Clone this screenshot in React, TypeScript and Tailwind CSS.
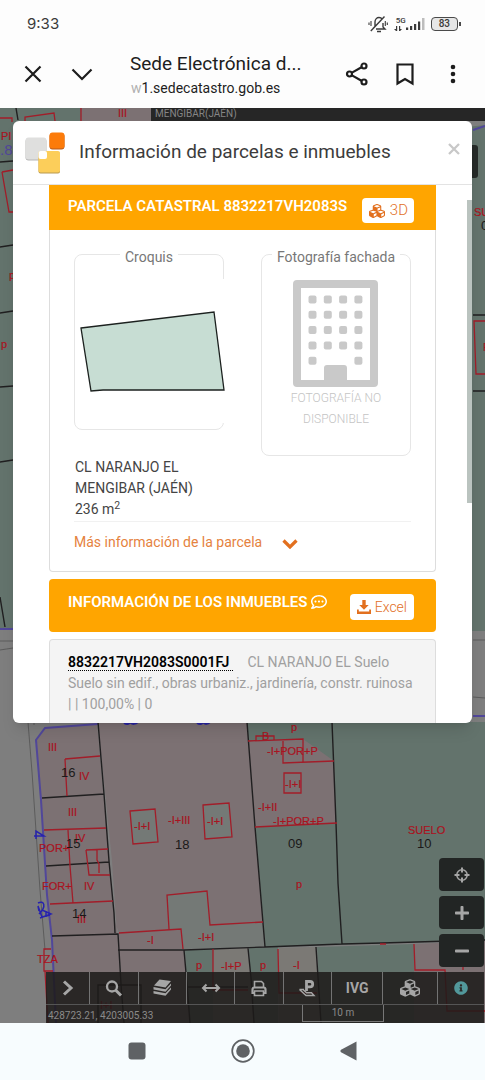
import type { ReactNode } from "react";
import { FaCubes, FaInfoCircle, FaPlus, FaMinus, FaRegCommentDots } from "react-icons/fa";

const BLACK_LINES = [
  "M16 108l2 12",
  "M0 162l13-1",
  "M0 247l13-2",
  "M0 313l13-2",
  "M0 387l13-1",
  "M0 462l13-2",
  "M0 597l5 30",
  "M98 722l6 72l5 67l5 52l1 20",
  "M42 798l62-4",
  "M46 866l63-4",
  "M52 936l66-2l1 16l2 34l3 39",
  "M118 950h66l81-3l77-3l40-1l103-3",
  "M184 950l3 34l3 39",
  "M247 722l8 105l5 60l5 60",
  "M332 722l4 101l2 60l4 61",
  "M248 948l3 30l3 45",
  "M316 947l2 30l3 46",
  "M98 1023v-38h43v38",
  "M188 987h60",
  "M473 315h12",
  "M473 391h12",
];

const RED_LINES = [
  "M0 118h12v4",
  "M25 121v-4l29-4l1 8",
  "M81 108v13",
  "M2 172l11-2M2 172l7 40h4",
  "M485 321h-11l2 53h9",
  "M65 759l35-3M65 759l2 37",
  "M44 830l62-2M68 830l2 36l3 37",
  "M50 904l63-3",
  "M86 850l22-1M86 850l3 25h21M97 850v10l2 4v9",
  "M130 811l25-2l3 33l-25 2z",
  "M203 805l26-2l3 34l-27 2z",
  "M119 933l62-4l2 20M169 929l-2-34l40-4l3 34l53-3",
  "M248 741l55-2v23M283 741v22l51-2",
  "M256 741v-5h18v4",
  "M284 773h17v20h-17z",
  "M255 827l82-4",
  "M213 949v41h35",
  "M278 949l1 44h38",
  "M414 944l1 26h30l2 41h38M463 970v-5",
  "M51 949h-7v22h9M45 971l3 52",
  "M380 944h6",
];

interface MapLabel {
  x: number;
  y: number;
  text: string;
}

const RED_LABELS: MapLabel[] = [
  { x: 1, y: 140, text: "PI" },
  { x: 9, y: 279, text: "p" },
  { x: 1, y: 348, text: "p" },
  { x: 118, y: 117, text: "III" },
  { x: 474, y: 216, text: "SUELO" },
  { x: 483, y: 351, text: "P" },
  { x: 48, y: 751, text: "III" },
  { x: 79, y: 780, text: "IV" },
  { x: 68, y: 816, text: "III" },
  { x: 75, y: 842, text: "IV" },
  { x: 39, y: 852, text: "POR+" },
  { x: 42, y: 890, text: "FOR+" },
  { x: 84, y: 890, text: "IV" },
  { x: 77, y: 923, text: "III" },
  { x: 37, y: 963, text: "TZA" },
  { x: 134, y: 830, text: "-I+I" },
  { x: 168, y: 824, text: "-I+III" },
  { x: 207, y: 825, text: "-I+I" },
  { x: 147, y: 944, text: "-I" },
  { x: 198, y: 941, text: "-I+I" },
  { x: 262, y: 740, text: "B" },
  { x: 291, y: 731, text: "p" },
  { x: 267, y: 755, text: "-I+POR+P" },
  { x: 285, y: 788, text: "-I+I" },
  { x: 258, y: 811, text: "-I+II" },
  { x: 273, y: 825, text: "-I+POR+P" },
  { x: 408, y: 834, text: "SUELO" },
  { x: 296, y: 888, text: "p" },
  { x: 196, y: 969, text: "p" },
  { x: 221, y: 970, text: "-I+P" },
  { x: 260, y: 969, text: "p" },
  { x: 293, y: 969, text: "-I" },
  { x: 100, y: 1009, text: "I+I" },
];

const NUMBERS: MapLabel[] = [
  { x: 61, y: 777, text: "16" },
  { x: 66, y: 848, text: "15" },
  { x: 72, y: 918, text: "14" },
  { x: 175, y: 849, text: "18" },
  { x: 288, y: 848, text: "09" },
  { x: 417, y: 848, text: "10" },
  { x: 481, y: 230, text: "01" },
];

function CadastralMap() {
  return (
    <svg
      viewBox="0 108 485 915"
      preserveAspectRatio="xMinYMin slice"
      className="absolute inset-0 h-full w-full font-['Liberation_Sans',sans-serif]"
      aria-hidden="true"
    >
      <path fill="#7e7e7e" d="M0 108h485v915H0z" />
      {/* green plots */}
      <path
        fill="#63736c"
        d="M0 108h81v522H0zM440 130l45-5v506h-45zM247 722h238v218l-220 7zM118 933l63-4l2 20l-64 1zM185 950l28-1v74h-24zM249 948l29-1v76h-25zM317 947l97-3v79h-93z"
      />
      {/* built plots */}
      <path
        fill="#7c7173"
        d="M81 108h70v14H81zM97 723l-52 5l-9 12l11 155l5 41l3 87h70l-6-73l65-1l-2-20l-63 4l-4-11zM98 722h149l8 105l8 95l-53 3l-3-34l-40 4l2 34l-52 4l-5-72zM248 741l55-2l31 22l2 62l-81 4zM119 950h65l6 73h-67zM414 944l71-3v82h-71z"
      />
      <path fill="#7b7975" d="M213 949l35-1l5 75h-40zM279 948l37-1l5 76h-42z" />
      <path fill="#747976" d="M130 811l25-2l3 33l-25 2zM203 805l26-2l3 34l-27 2zM167 895l40-4l3 34l53-3l2 25l-82 2l-2-20l-12 1z" />
      <path
        fill="none"
        stroke="#5c5c5c"
        d="M28 722l4 50l8 118l5 60M0 641h13M0 650l13-2M473 640h12M473 697l12 1M34 722v3"
      />
      <path
        fill="none"
        stroke="#51479a"
        strokeWidth="2"
        d="M98 724l-53 4l-9 12l5 60l6 95l5 45l4 83M0 629h13M473 716h12M473 130l12-4"
      />
      <path fill="none" stroke="#201f20" strokeWidth="1.4" d={BLACK_LINES.join("")} />
      <path fill="none" stroke="#a21d29" strokeWidth="1.3" d={RED_LINES.join("")} />
      <path fill="none" stroke="#2723ae" strokeWidth="1.5" d="M34 836h10l-8-5v8M38 903c6-3 9 3 1 11M39 911l-1-5M38 906l4 11 8-2M40 918l11-4-9-4M46 911v6" />
      <path fill="none" stroke="#2924a0" strokeWidth="2" d="M124 723c3 2 5 1 6-1c2 3 6 2 8 0M197 723c3 2 5 1 6-1c2 3 5 2 7 0" />
      <text x="0" y="155" fontSize="15" fill="#51479a">.8</text>
      {RED_LABELS.map(({ x, y, text }, i) => (
        <text key={i} x={x} y={y} fontSize="11" fill="#a9131f" stroke="#a9131f" strokeWidth="0.2">
          {text}
        </text>
      ))}
      {NUMBERS.map(({ x, y, text }) => (
        <text key={text} x={x} y={y} fontSize="13" fill="#1b1919">
          {text}
        </text>
      ))}
      <path fill="#262626" d="M151 108h334v13H151z" />
      <rect x="460" y="145" width="18" height="33" rx="3" fill="#262a28" />
    </svg>
  );
}

function StatusBar() {
  return (
    <div className="flex items-center justify-between pt-3 pr-6 pl-[27px] text-[#3b3b3b]">
      <span className="font-['Inter',sans-serif] text-[15px] leading-6">9:33</span>
      <div className="flex items-center gap-1.5">
        <svg viewBox="0 0 20 18" className="h-[18px] w-5" fill="none" stroke="currentColor" strokeWidth="1.4">
          <path d="M5 13.500l2-2V7c0-3 2-4.500 4-4.500 1.500 0 2.600.7 3.200 1.800M15 8v4l2 2H8M9 16.500h4M2.800 16L16.500 1.500" />
          <path d="M3 6v5M1 7.500v2.500M17.300 6v5M19.300 7.500v2.500" strokeWidth="1.100" />
        </svg>
        <div className="flex flex-col gap-px">
          <span className="pl-0.5 text-[8px] leading-[8px] font-medium">5G</span>
          <svg viewBox="0 0 8 6" className="h-1.5 w-2" fill="currentColor">
            <path d="M2 0h1.200v5H2L0 3h2zM5 5h1.200L8 3H6.200V0H5z" />
          </svg>
        </div>
        <svg viewBox="0 0 19 12" className="-ml-1.5 h-3 w-[19px]" fill="currentColor">
          <path d="M0 9.500h2.200v2.500H0zM4 8h2.200v4H4zM8 6h2.200v6H8zM12 3.500h2.200V12H12z" />
          <path d="M16 0h2.500v12H16z" fill="#bdbdbd" />
        </svg>
        <div className="flex items-center">
          <span className="rounded border border-[#4a4a4a] bg-[#e6e6e6] px-[7px] text-[10px] leading-3 font-medium">
            83
          </span>
          <span className="ml-px h-1 w-0.5 bg-[#4a4a4a]" />
        </div>
      </div>
    </div>
  );
}

function BrowserBar() {
  return (
    <header className="flex items-center pt-3 pr-5 pb-2 pl-5 text-[#1d1d1d]">
      <button type="button" aria-label="Cerrar" className="p-1">
        <svg viewBox="0 0 18 18" className="h-[18px] w-[18px]" fill="none" stroke="currentColor" strokeWidth="2.200">
          <path d="M1.500 1.500l15 15M16.500 1.500l-15 15" />
        </svg>
      </button>
      <button type="button" aria-label="Minimizar" className="ml-5 p-1">
        <svg viewBox="0 0 24 18" className="h-[18px] w-6" fill="none" stroke="currentColor" strokeWidth="2.200">
          <path d="M2.500 4.500l9.500 9.500l9.500-9.500" />
        </svg>
      </button>
      <div className="ml-8 min-w-0 flex-1 pt-1">
        <p className="truncate text-[19px] leading-6">Sede Electrónica d...</p>
        <p className="pl-px text-sm leading-6">
          <span className="text-[#b0b0b0]">w</span>1.sedecatastro.gob.es
        </p>
      </div>
      <div className="flex items-center gap-6">
        <button type="button" aria-label="Compartir">
          <svg viewBox="0 0 24 26" className="h-[26px] w-6" fill="none" stroke="currentColor" strokeWidth="2.200">
            <circle cx="4.500" cy="13" r="2.500" />
            <circle cx="19" cy="5" r="2.500" />
            <circle cx="19" cy="21" r="2.500" />
            <path d="M7 11.600l9.500-5.400M7 14.400l9.500 5.400" />
          </svg>
        </button>
        <button type="button" aria-label="Marcador">
          <svg viewBox="0 0 24 26" className="h-[26px] w-6" fill="none" stroke="currentColor" strokeWidth="2.200">
            <path d="M4.500 3.500h15v19l-7.500-4.500l-7.500 4.500z" />
          </svg>
        </button>
        <button type="button" aria-label="Más opciones">
          <svg viewBox="0 0 24 26" className="h-[26px] w-6" fill="currentColor">
            <circle cx="12" cy="6" r="2.300" />
            <circle cx="12" cy="13" r="2.300" />
            <circle cx="12" cy="20" r="2.300" />
          </svg>
        </button>
      </div>
    </header>
  );
}

function CatastroLogo() {
  return (
    <svg viewBox="0 0 40 42" className="h-[42px] w-10 shrink-0">
      <rect x="0.500" y="6.500" width="21" height="22" rx="3" fill="#b5b5b5" />
      <rect x="0.500" y="5.500" width="21" height="22" rx="3" fill="#dfdfde" />
      <rect x="24.500" y="1.500" width="15" height="16" rx="3" fill="#b75a1b" />
      <rect x="24.500" y="0.500" width="15" height="16" rx="3" fill="#fc7b0a" />
      <rect x="13.500" y="20" width="21.500" height="21.500" rx="2" fill="#b99a50" />
      <rect x="13.500" y="19" width="21.500" height="21.500" rx="2" fill="#fcce5a" />
      <rect x="13.500" y="19" width="8.500" height="8" rx="2" fill="#fff" />
    </svg>
  );
}

function BuildingIcon() {
  return (
    <svg viewBox="0 0 86 108" className="h-[108px] w-[86px]" fill="#c9c9c9">
      <path fillRule="evenodd" d="M4 0h77a4 4 0 0 1 4 4v99a4 4 0 0 1-4 4H4a4 4 0 0 1-4-4V4a4 4 0 0 1 4-4zM8 8v92h23V88a3 3 0 0 1 3-3h17a3 3 0 0 1 3 3v12h23V8z" />
      {[0, 1, 2, 3, 4].map((row) =>
        [0, 1, 2, 3].map((col) =>
          row === 4 && (col === 1 || col === 2) ? null : (
            <rect key={`${row}-${col}`} x={15.5 + col * 15.3} y={15.5 + row * 15.3} width="8" height="8" rx="2" />
          )
        )
      )}
    </svg>
  );
}

interface SketchBoxProps {
  title: string;
  children: ReactNode;
}

function SketchBox({ title, children }: SketchBoxProps) {
  return (
    <fieldset className="w-[150px] min-w-0 rounded-lg border border-[#e6e6e6]">
      <legend className="mx-auto px-[5px] pt-1.5 text-sm leading-4 text-[#777]">{title}</legend>
      {children}
    </fieldset>
  );
}

function ParcelModal() {
  return (
    <section
      role="dialog"
      aria-labelledby="modal-title"
      className="relative mx-[13px] mt-[13px] overflow-hidden rounded-md bg-white shadow-lg"
    >
      <div className="flex h-16 items-center border-b border-[#e3e3e3] px-3">
        <CatastroLogo />
        <h1 id="modal-title" className="ml-3.5 flex-1 text-[19px] text-[#3c3c3c]">
          Información de parcelas e inmuebles
        </h1>
        <button type="button" aria-label="Cerrar ventana" className="mb-2 text-[#c8c8c8]">
          <svg viewBox="0 0 12 12" className="h-3 w-3" fill="none" stroke="currentColor" strokeWidth="2.300">
            <path d="M1 1l10 10M11 1L1 11" />
          </svg>
        </button>
      </div>
      <span className="absolute top-[79px] right-0 h-[303px] w-[5px] bg-[#bac3bf]" />

      <div className="px-9">
        <article className="rounded-b border border-t-0 border-[#ddd]">
          <div className="-mx-px flex items-start justify-between bg-[#ffa500] pt-[13px] pr-[22px] pb-[7px] pl-[19px]">
            <h2 className="text-[15px] leading-4 font-semibold whitespace-nowrap text-white">
              PARCELA CATASTRAL 8832217VH2083S
            </h2>
            <button
              type="button"
              className="flex items-center gap-1 rounded-sm bg-white px-1.5 text-[15px] leading-[25px] font-light text-[#e2701f]"
            >
              <FaCubes className="h-4 w-[18px]" />
              3D
            </button>
          </div>
          <div className="px-6 pt-[13px]">
            <div className="flex items-start justify-between">
              <SketchBox title="Croquis">
                <svg viewBox="0 0 150 144" className="relative mt-3.5 mb-1.5 h-36 w-[150px]">
                  <path fill="#fff" d="M2 0h148v144H2z" />
                  <path fill="#c7ddd3" stroke="#1c211f" strokeWidth="1.300" d="M6 49L139 33l10 78h-121l-12 1z" />
                </svg>
              </SketchBox>
              <SketchBox title="Fotografía fachada">
                <div className="flex flex-col items-center pt-[15px] pb-[25px]">
                  <BuildingIcon />
                  <p className="w-24 text-center text-xs leading-[21px] font-light text-[#c4c4c4]">
                    FOTOGRAFÍA NO DISPONIBLE
                  </p>
                </div>
              </SketchBox>
            </div>
            <p className="pt-px pb-px pl-px text-sm leading-[21px] text-[#444]">
              CL NARANJO EL
              <br />
              MENGIBAR (JAÉN)
              <br />
              236 m<sup>2</sup>
            </p>
            <hr className="border-[#f1f1f1]" />
            <button
              type="button"
              className="mt-2 mb-[17px] flex items-center gap-5 text-sm leading-6 text-[#e58240]"
            >
              Más información de la parcela
              <svg viewBox="0 0 16 10" className="mt-1 h-2.5 w-4 text-[#e2701f]" fill="none" stroke="currentColor" strokeWidth="3.200">
                <path d="M1.500 1.500L8 8l6.500-6.500" />
              </svg>
            </button>
          </div>
        </article>

        <div className="mt-[7px] flex h-[53px] items-start justify-between rounded bg-[#ffa500] pt-[15px] pr-[22px] pl-[19px]">
          <h2 className="flex items-center gap-1 text-[15px] leading-4 font-semibold whitespace-nowrap text-white">
            INFORMACIÓN DE LOS INMUEBLES
            <FaRegCommentDots className="h-4 w-4" />
          </h2>
          <button
            type="button"
            className="flex items-center gap-1 rounded-sm bg-white px-[7px] text-sm leading-[26px] font-light text-[#e2701f]"
          >
            <svg viewBox="0 0 14 14" className="h-3.5 w-3.5" fill="currentColor">
              <path d="M5.300 0h3.400v5h3L7 9.800 2.300 5h3zM0 9.500h1.800v2h10.400v-2H14V14H0z" />
            </svg>
            Excel
          </button>
        </div>

        <article className="mt-[7px] rounded-t border border-b-0 border-[#ddd] bg-[#f4f4f4] pt-3 pr-4 pb-2 pl-[18px] text-sm leading-[21px] text-[#a0a0a0]">
          <a href="#8832217VH2083S0001FJ" className="mr-3.5 border-b border-dotted border-black pr-1 font-semibold text-black">
            8832217VH2083S0001FJ
          </a>
          CL NARANJO EL Suelo
          <br />
          Suelo sin edif., obras urbaniz., jardinería, constr. ruinosa
          <br />| | 100,00% | 0
        </article>
      </div>
    </section>
  );
}

interface Tool {
  label: string;
  width: string;
  icon: ReactNode;
}

const TOOLS: Tool[] = [
  {
    label: "Desplegar",
    width: "w-11",
    icon: <path d="M7 4.500l7 6.500-7 6.500" fill="none" stroke="currentColor" strokeWidth="3" />,
  },
  {
    label: "Buscar",
    width: "w-12",
    icon: (
      <g fill="none" stroke="currentColor">
        <circle cx="9" cy="9.500" r="5" strokeWidth="2.300" />
        <path d="M12.500 13l5.500 5.500" strokeWidth="3" />
      </g>
    ),
  },
  {
    label: "Capas",
    width: "w-12",
    icon: (
      <g fill="currentColor">
        <path d="M8.500 2.500l11.500 1.500-5.500 6.500L3 8.500z" />
        <path d="M2.500 10l12 2.300L20 6.500v2l-5.500 6.300L2.500 12.500zM2.500 14l12 2.300L20 10.500v2l-5.500 6.300L2.500 16.500z" />
      </g>
    ),
  },
  {
    label: "Medir",
    width: "w-12",
    icon: <path d="M3 11h16M6.500 7.500L3 11l3.500 3.500M15.500 7.500L19 11l-3.500 3.500" fill="none" stroke="currentColor" strokeWidth="2" />,
  },
  {
    label: "Imprimir",
    width: "w-12",
    icon: (
      <g fill="none" stroke="currentColor" strokeWidth="1.600">
        <path d="M6.500 11V4.500h7l2 2V11M6.500 14v4.500h9V14z" />
        <path d="M6.500 16H4.500v-3.500a2 2 0 0 1 2-2h9a2 2 0 0 1 2 2V16h-2" strokeWidth="2.200" />
      </g>
    ),
  },
  {
    label: "Street view",
    width: "w-12",
    icon: (
      <g fill="none" stroke="currentColor">
        <path d="M10.500 14V4.500h3.500a2.700 2.700 0 0 1 0 5.400h-3.500" strokeWidth="2.800" />
        <path d="M3.500 12.500H8M3.500 12.500l6.500 6h8l-2.500-2.700h-5L7 12.500" strokeWidth="1.400" />
      </g>
    ),
  },
  { label: "IVG", width: "w-[51px]", icon: null },
  { label: "Vista 3D", width: "w-[54px]", icon: null },
  { label: "Información", width: "w-[46px]", icon: null },
];

function ToolIcon({ label, icon }: Tool) {
  if (label === "IVG") return <span className="text-sm font-bold">IVG</span>;
  if (label === "Vista 3D") return <FaCubes className="h-5 w-5" />;
  if (label === "Información") return <FaInfoCircle className="h-3.5 w-3.5 text-[#52989b]" />;
  return (
    <svg viewBox="0 0 22 22" className="h-[22px] w-[22px]">
      {icon}
    </svg>
  );
}

function MapControls() {
  return (
    <div className="absolute right-px bottom-0 left-[46px] flex flex-col items-end text-[#a6a6a6]">
      <div className="mb-[5px] flex flex-col gap-[5px]">
        <button
          type="button"
          aria-label="Mi ubicación"
          className="flex h-[33px] w-[45px] items-center justify-center rounded bg-[#222524]"
        >
          <svg viewBox="0 0 16 16" className="h-4 w-4" fill="none" stroke="currentColor">
            <circle cx="8" cy="8" r="5.200" strokeWidth="1.500" />
            <path d="M8 0.500v5M8 10.500v5M0.500 8h5M10.500 8h5" strokeWidth="2" />
          </svg>
        </button>
        <button
          type="button"
          aria-label="Acercar"
          className="flex h-[33px] w-[45px] items-center justify-center rounded bg-[#222524]"
        >
          <FaPlus className="h-4 w-4" />
        </button>
        <button
          type="button"
          aria-label="Alejar"
          className="flex h-[33px] w-[45px] items-center justify-center rounded bg-[#222524]"
        >
          <FaMinus className="h-4 w-4" />
        </button>
      </div>
      <div className="w-full bg-[#1c1a19]/85">
        <div className="flex h-8 divide-x divide-[#737373]">
          {TOOLS.map((tool) => (
            <button
              key={tool.label}
              type="button"
              aria-label={tool.label}
              className={`flex grow items-center justify-center ${tool.width}`}
            >
              <ToolIcon {...tool} />
            </button>
          ))}
        </div>
        <div className="flex h-[19px] border-t border-[#555] text-[10px] leading-[22px] text-[#8a8a8a]">
          <span className="flex-1 pl-0.5">428723.21, 4203005.33</span>
          <span className="mr-[100px] h-[17px] w-[82px] border border-t-0 border-[#777] text-center leading-4">10 m</span>
        </div>
      </div>
    </div>
  );
}

function NavigationBar() {
  return (
    <nav className="flex items-center justify-center gap-[82px] bg-[#f7fcfe] pt-4 pb-[17px] text-[#5f6265]">
      <button type="button" aria-label="Recientes">
        <svg viewBox="0 0 24 24" className="h-6 w-6" fill="currentColor">
          <rect x="3.500" y="3.500" width="17" height="17" rx="3" />
        </svg>
      </button>
      <button type="button" aria-label="Inicio">
        <svg viewBox="0 0 24 24" className="h-6 w-6">
          <circle cx="12" cy="12" r="10.800" fill="none" stroke="currentColor" strokeWidth="1.700" />
          <circle cx="12" cy="12" r="6.800" fill="currentColor" />
        </svg>
      </button>
      <button type="button" aria-label="Atrás">
        <svg viewBox="0 0 24 24" className="h-6 w-6" fill="currentColor">
          <path d="M19.500 2.500v19L4 13.200q-1.500-1.200 0-2.400z" />
        </svg>
      </button>
    </nav>
  );
}

export default function App() {
  return (
    <div className="flex min-h-screen flex-col bg-[#fdfdfd] font-['Roboto',sans-serif]">
      <StatusBar />
      <BrowserBar />
      <main className="relative flex-1 overflow-hidden">
        <CadastralMap />
        <span className="absolute top-0 left-[155px] text-[10px] leading-3 text-[#858585]">MENGIBAR(JAÉN)</span>
        <ParcelModal />
        <MapControls />
      </main>
      <NavigationBar />
    </div>
  );
}
